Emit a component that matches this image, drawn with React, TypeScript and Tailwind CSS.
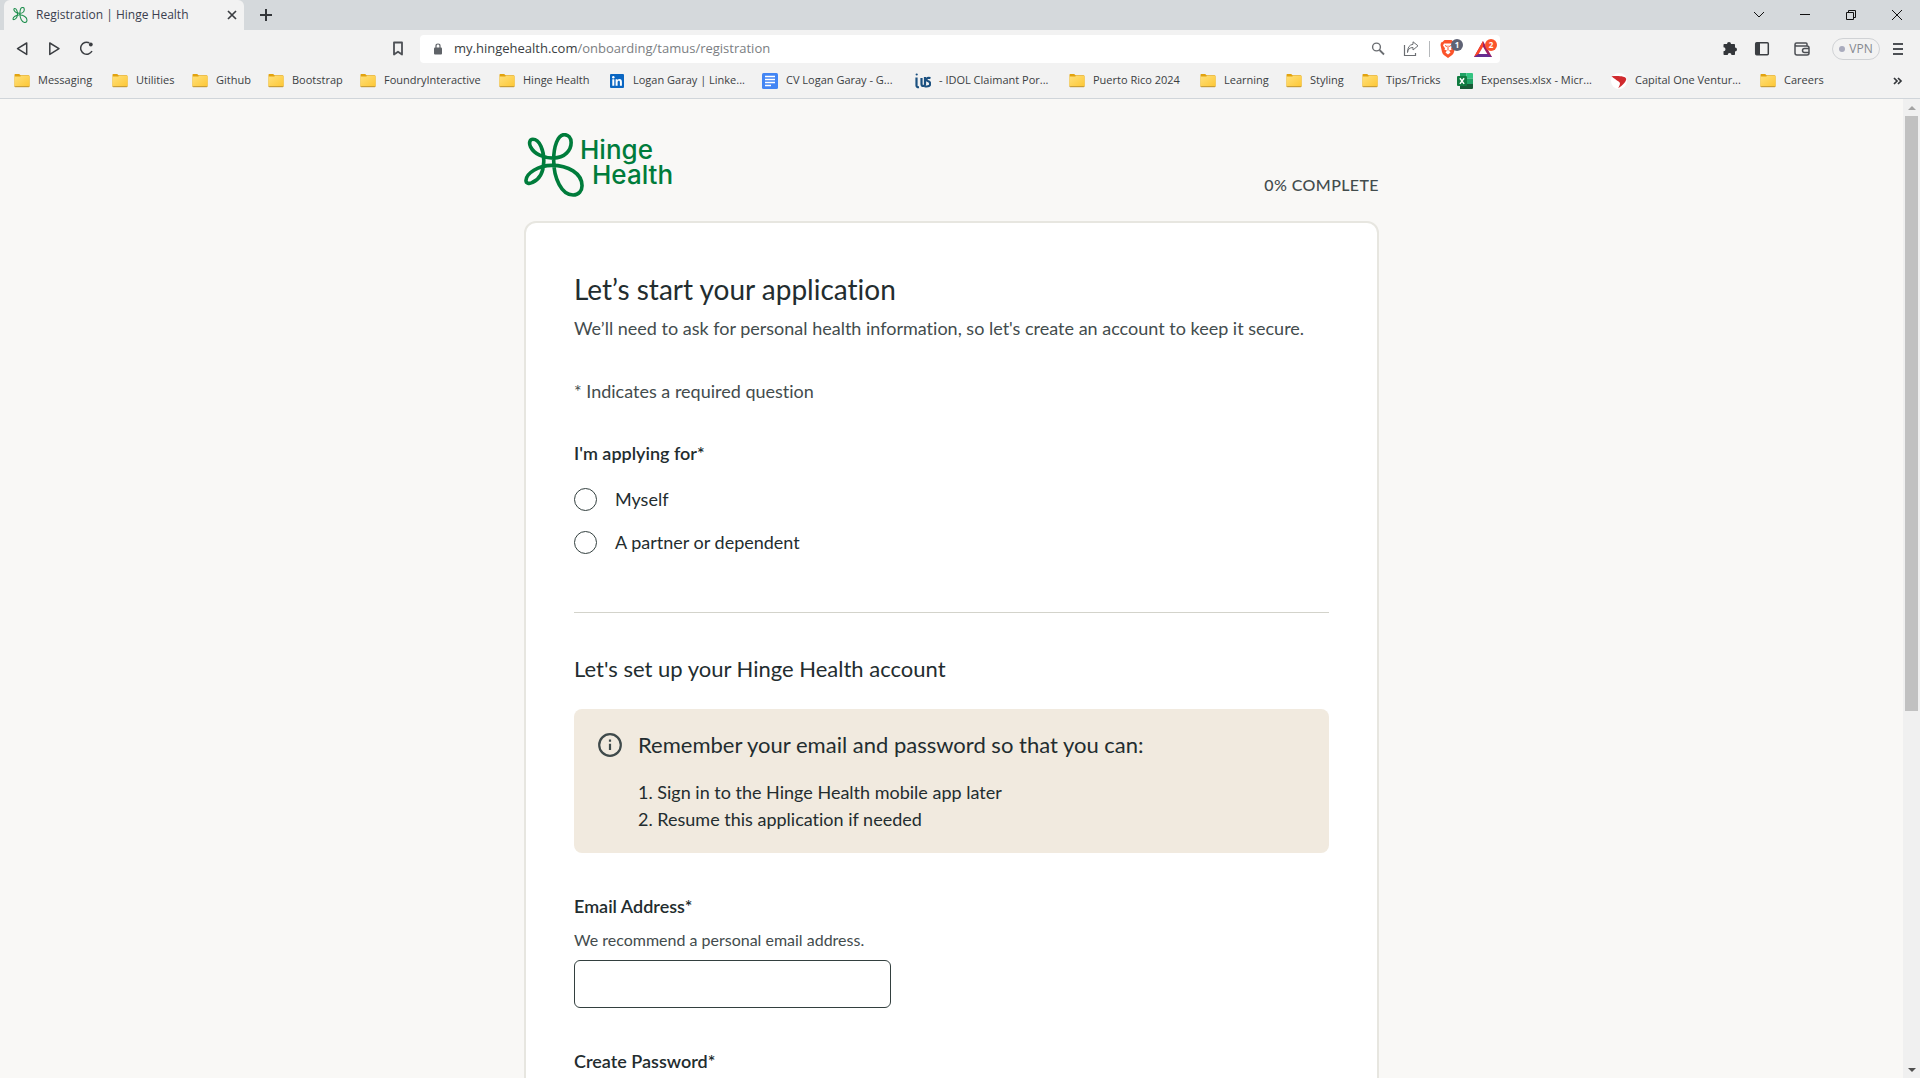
import type { ReactNode } from 'react';

const FolderIcon = () => (
  <svg className="size-4 shrink-0" viewBox="0 0 16 16" aria-hidden="true">
    <defs>
      <linearGradient id="folder" x1="0" y1="0" x2="1" y2="1">
        <stop offset="0" stopColor="#ffe07a" />
        <stop offset="1" stopColor="#fdc735" />
      </linearGradient>
    </defs>
    <path d="M.5 1.700q0-.7.700-.7h4l1.300 1.300h8q1 0 1 .9v10H.5z" fill="#e2a310" />
    <path d="M.5 3.500h5.800l.8-.8h7.600q.8 0 .8.800v9.300q0 .7-.7.700H1.200q-.7 0-.7-.7z" fill="url(#folder)" />
    <path d="M.6 13.100q.2.600.8.600h13.200q.6 0 .8-.6" fill="none" stroke="#b98a1c" strokeWidth=".9" />
  </svg>
);

const LinkedInIcon = () => (
  <svg className="size-4 shrink-0" viewBox="0 0 16 16" aria-hidden="true">
    <rect x="1" y="1" width="14" height="14" rx="1" fill="#0a66c2" />
    <path d="M3.300 6.300h2v6.400h-2zM6.600 6.300h1.900v.9c.4-.7 1.100-1.100 2-1.100 1.800 0 2.400 1.100 2.400 3v3.600h-2V9.400c0-.9-.2-1.600-1.100-1.600S8.600 8.500 8.600 9.400v3.300h-2z" fill="#fff" />
    <circle cx="4.300" cy="4.200" r="1.200" fill="#fff" />
  </svg>
);

const DocIcon = () => (
  <svg className="size-4 shrink-0" viewBox="0 0 16 16" aria-hidden="true">
    <rect width="16" height="16" rx="1.500" fill="#4285f4" />
    <path d="M3 3.500h10M3 6.500h10M3 9.500h10M3 12.500h6" stroke="#fff" strokeWidth="1.400" />
  </svg>
);

const IusIcon = () => (
  <svg className="size-4 shrink-0" viewBox="0 0 16 16" fill="none" stroke="#1c5180" aria-hidden="true">
    <path d="M1.500 4.500v8q0 2 2.500 1.700M6.500 5v6q0 2 1.700 2 1.800 0 1.800-2V4" strokeWidth="2.200" />
    <path d="M15.500 5q-4-.8-4 1.400 0 1.300 1.800 1.900 1.900.7 1.900 2.400 0 3.500-5.500 2.600" strokeWidth="2.200" />
    <circle cx="1.700" cy="1.500" r="1.100" fill="#1c5180" stroke="none" />
  </svg>
);

const ExcelIcon = () => (
  <svg className="size-4 shrink-0" viewBox="0 0 16 16" aria-hidden="true">
    <path d="M3 0h6.500v5.500H3z" fill="#21a366" />
    <path d="M9.500 0H15q1 0 1 1v4.500H9.500z" fill="#33c481" />
    <path d="M3 5.500h6.500V11H3z" fill="#107c41" />
    <path d="M9.500 5.500H16V11H9.500z" fill="#21a366" />
    <path d="M3 11h13v4q0 1-1 1H3z" fill="#185c37" />
    <rect y="3" width="10" height="10" rx="1" fill="#107c41" />
    <path d="M2.900 5.200l4.200 5.700M7.100 5.200l-4.200 5.700" stroke="#fff" strokeWidth="1.500" />
  </svg>
);

const CapitalIcon = () => (
  <svg className="size-4 shrink-0" viewBox="0 0 16 16" aria-hidden="true">
    <circle cx="8" cy="8" r="8" fill="#fff" />
    <path d="M.5 3.200C6 2.700 15 2.700 15.200 6c.1 2.800-4.200 6.800-8 9.200 1.200-2.500 2.300-4.300 1.500-5.700C7.600 8 3.500 6 .5 3.200z" fill="#d02a2e" />
  </svg>
);

type Bookmark = { label: string; width: string; icon?: ReactNode };

const bookmarks: Bookmark[] = [
  { label: 'Messaging', width: 'w-[98px]' },
  { label: 'Utilities', width: 'w-[80px]' },
  { label: 'Github', width: 'w-[76px]' },
  { label: 'Bootstrap', width: 'w-[92px]' },
  { label: 'FoundryInteractive', width: 'w-[139px]' },
  { label: 'Hinge Health', width: 'w-[110px]' },
  { label: 'Logan Garay | Linke...', width: 'w-[153px]', icon: <LinkedInIcon /> },
  { label: 'CV Logan Garay - G...', width: 'w-[153px]', icon: <DocIcon /> },
  { label: '- IDOL Claimant Por...', width: 'w-[154px]', icon: <IusIcon /> },
  { label: 'Puerto Rico 2024', width: 'w-[131px]' },
  { label: 'Learning', width: 'w-[86px]' },
  { label: 'Styling', width: 'w-[76px]' },
  { label: 'Tips/Tricks', width: 'w-[95px]' },
  { label: 'Expenses.xlsx - Micr...', width: 'w-[154px]', icon: <ExcelIcon /> },
  { label: 'Capital One Ventur...', width: 'w-[149px]', icon: <CapitalIcon /> },
  { label: 'Careers', width: 'w-[80px]' },
];

const Butterfly = ({ className, color, weight }: { className: string; color: string; weight: number }) => (
  <svg className={className} viewBox="42 68 180 194" fill="none" stroke={color} strokeWidth={weight} aria-hidden="true">
    <path d="M101 155C102 120 88 87 68 87C57 87 56 100 61 110C72 132 100 144 130 144C165 144 184 120 184 97C184 82 175 73 163 73C143 73 131 110 131 150C131 205 155 256 190 256C207 256 217 243 217 228C217 190 175 166 125 166C85 166 47 190 47 212C47 221 57 223 66 218C85 210 100 190 101 155Z" />
  </svg>
);

const TabStrip = () => (
  <div className="flex h-[30px] items-stretch bg-[#d5d9dc] pl-1">
    <div className="flex w-60 items-center rounded-t-md bg-[#f2f2f2] pr-1.5 pl-2">
      <Butterfly className="size-4" color="#1f8f4e" weight={13} />
      <span className="ml-2 flex-1 text-xs whitespace-nowrap text-[#3b3e4f]">Registration | Hinge Health</span>
      <button aria-label="Close tab" className="flex size-3 items-center justify-center">
        <svg className="size-3" viewBox="0 0 12 12" stroke="#3b3e42" strokeWidth="1.700"><path d="M2 2l8 8M10 2l-8 8" /></svg>
      </button>
    </div>
    <button aria-label="New tab" className="ml-4 self-center">
      <svg className="size-3" viewBox="0 0 12 12" stroke="#33363a" strokeWidth="2"><path d="M6 0v12M0 6h12" /></svg>
    </button>
    <div className="ml-auto flex items-center">
      <button aria-label="Search tabs" className="flex w-[46px] justify-center">
        <svg className="size-3" viewBox="0 0 12 12" fill="none" stroke="#111"><path d="M1 3l5 5 5-5" /></svg>
      </button>
      <button aria-label="Minimize" className="flex w-[46px] justify-center">
        <svg className="size-3" viewBox="0 0 12 12" stroke="#111"><path d="M1 5.500h10" /></svg>
      </button>
      <button aria-label="Restore" className="flex w-[46px] justify-center">
        <svg className="size-3" viewBox="0 0 12 12" fill="none" stroke="#111"><path d="M1.500 3.500h7v7h-7zM3.500 3.500v-2h7v7h-2" /></svg>
      </button>
      <button aria-label="Close window" className="flex w-[46px] justify-center">
        <svg className="size-3" viewBox="0 0 12 12" stroke="#111"><path d="M1 1l10 10M11 1L1 11" /></svg>
      </button>
    </div>
  </div>
);

const Toolbar = () => (
  <div className="flex h-[37px] items-center px-4">
    <div className="flex w-[388px] items-center gap-4">
      <button aria-label="Back">
        <svg className="size-4" viewBox="0 0 16 16" fill="none" stroke="#3b3e42" strokeWidth="1.500" strokeLinejoin="round"><path d="M10.700 2v11.400L1.500 7.700z" /></svg>
      </button>
      <button aria-label="Forward">
        <svg className="size-4" viewBox="0 0 16 16" fill="none" stroke="#3b3e42" strokeWidth="1.500" strokeLinejoin="round"><path d="M1.800 2v11.400L11 7.700z" /></svg>
      </button>
      <button aria-label="Reload">
        <svg className="size-4" viewBox="0 0 16 16" fill="none" stroke="#3b3e42" strokeWidth="1.500"><path d="M9.300 1.800A6 6 0 1 0 12 10" /><circle cx="10.800" cy="3.500" r="1.900" fill="#3b3e42" stroke="none" /></svg>
      </button>
      <button aria-label="Bookmark this page" className="ml-auto">
        <svg className="h-4 w-3" viewBox="0 0 12 16" fill="none" stroke="#4d5055" strokeWidth="1.800" strokeLinejoin="round"><path d="M2 1.500h8v12l-4-2.800-4 2.800z" /></svg>
      </button>
    </div>
    <div className="ml-4 flex h-7 max-w-[1080px] flex-1 items-center rounded bg-white pr-2 pl-3.5">
      <svg className="h-3 w-2" viewBox="0 0 8 12" aria-hidden="true"><rect y="4.500" width="8" height="7" rx="1" fill="#5f6368" /><path d="M2 5V3q0-2 2-2t2 2v2" fill="none" stroke="#5f6368" strokeWidth="1.200" /></svg>
      <p className="ml-3 flex-1 text-[13px] whitespace-nowrap text-[#7b7e82]"><span className="text-[#3b3e42]">my.hingehealth.com</span>/onboarding/tamus/registration</p>
      <button aria-label="Zoom">
        <svg className="size-3.5" viewBox="0 0 14 14" fill="none" stroke="#6b6e72" strokeWidth="1.400"><circle cx="5.500" cy="5" r="3.900" /><path d="M8.500 8l4.500 4.500" strokeWidth="1.800" /></svg>
      </button>
      <button aria-label="Share" className="ml-[18px]">
        <svg className="size-4" viewBox="0 0 16 16" fill="none" stroke="#6b6e72"><path d="M1.500 4v10.500h11V12" strokeWidth="1.200" /><path d="M4.500 11.500q.5-5 5.500-5V9l5-4.200-5-4v2.500Q4.500 4 4.500 11.500z" /></svg>
      </button>
      <span className="ml-2.5 h-4 w-px bg-[#b5b8bb]" />
      <button aria-label="Brave Shields" className="relative ml-2.5">
        <svg className="h-[18px] w-4" viewBox="0 0 16 18"><path d="M4.500 0h7L13.500 2l1.500.5.5 2.500-1.500 7q-.5 2-2.500 3.500L8 18l-3.500-2.500Q2.500 14 2 12L.5 5 1 2.500 2.500 2z" fill="#fb542b" /><path d="M4 3.500h8l1 2-2 2.800.5 1.500-2.500.7 1.500 2L8 14.500 5.500 12.500l1.500-2-2.500-.7.5-1.500L3 5.500z" fill="#fff" /><path d="M5 5.500l2 1M11 5.500l-2 1M8 5.500v5" stroke="#fb542b" /></svg>
        <span className="absolute -top-px left-[11px] flex size-3 items-center justify-center rounded-full bg-[#5f6375] text-[8px] font-bold text-white">1</span>
      </button>
      <button aria-label="Brave Rewards" className="relative ml-[18px]">
        <svg className="h-4 w-[18px]" viewBox="0 0 18 16"><path d="M9 0l9 16H0z" fill="#9e1f63" /><path d="M9 0v6L4.500 13 0 16z" fill="#ff4724" /><path d="M0 16l4.500-3h9l4.500 3z" fill="#662d91" /><path d="M9 5.800l4.300 7.200H4.700z" fill="#fff" /></svg>
        <span className="absolute -top-0.5 left-[11px] flex size-3 items-center justify-center rounded-full bg-[#fb542b] text-[8px] font-bold text-white">2</span>
      </button>
    </div>
    <div className="ml-auto flex items-center">
      <button aria-label="Extensions">
        <svg className="size-4" viewBox="0 0 16 16" fill="#33363a"><path d="M5 3a2 2 0 1 1 4 0h3.200q.8 0 .8.800V6.500a2 2 0 1 1 0 4v2.700q0 .8-.8.800H9.500a1.900 1.900 0 0 0-3.800 0H2.300q-.8 0-.8-.8v-3a2 2 0 0 0 0-4V3.800q0-.8.8-.8z" /></svg>
      </button>
      <button aria-label="Sidebar" className="ml-4">
        <svg className="size-4" viewBox="0 0 16 16"><rect x="1.700" y="1.700" width="12.600" height="12" rx="1" fill="none" stroke="#3b3e42" strokeWidth="1.500" /><path d="M2 2h4v12H2z" fill="#3b3e42" /></svg>
      </button>
      <button aria-label="Wallet" className="ml-6">
        <svg className="size-4" viewBox="0 0 16 16" fill="none" stroke="#4d5055" strokeWidth="1.500"><path d="M13 5V3q0-1-1-1H2.500Q1 2 1 3.500V12q0 2 2 2h10q2 0 2-2V7q0-2-2-2H2.500Q1 5 1 3.500" /><path d="M15 7.500h-4.500a2 2 0 0 0 0 4H15" /></svg>
      </button>
      <button className="ml-[22px] flex h-[22px] w-12 items-center justify-center gap-1 rounded-full border border-[#d0d2d5] text-xs text-[#85888f]">
        <span className="size-1.5 rounded-full bg-[#a9abbd]" />VPN
      </button>
      <button aria-label="Menu" className="ml-3">
        <svg className="h-4 w-3" viewBox="0 0 12 16" stroke="#4d5055" strokeWidth="1.800"><path d="M1 3h10M1 8h10M1 13h10" /></svg>
      </button>
    </div>
  </div>
);

const BookmarksBar = () => (
  <nav className="flex h-8 items-center border-b border-[#d0d5da] pr-4 pb-1 pl-3.5">
    {bookmarks.map((b) => (
      <a key={b.label} href="#" className={`flex shrink-0 items-center gap-2 whitespace-nowrap text-[#3b3e42] ${b.width}`}>
        {b.icon ?? <FolderIcon />}
        {b.label}
      </a>
    ))}
    <button aria-label="More bookmarks" className="ml-auto">
      <svg className="h-3 w-3" viewBox="0 0 12 12" fill="none" stroke="#33363a" strokeWidth="1.700"><path d="M2 3l3 3-3 3M6 3l3 3-3 3" /></svg>
    </button>
  </nav>
);

const Scrollbar = () => (
  <div className="flex w-[17px] shrink-0 flex-col items-center bg-[#f0f0f0]">
    <svg className="h-[17px] w-2" viewBox="0 0 8 17"><path d="M0 11h8L4 7z" fill="#a3a3a3" /></svg>
    <div className="flex w-full flex-1 justify-center">
      <div className="h-[63%] w-[13px] bg-[#c1c1c1]" />
    </div>
    <svg className="h-[17px] w-2" viewBox="0 0 8 17"><path d="M0 7h8l-4 4z" fill="#505050" /></svg>
  </div>
);

const Choice = ({ label }: { label: string }) => (
  <label className="flex h-[27px] items-center gap-[18px] text-[#232d2f]">
    <input type="radio" name="applicant" className="size-[23px] appearance-none rounded-full border border-[#33403f] bg-white checked:bg-[#007c3b]" />
    {label}
  </label>
);

const Registration = () => (
  <main className="flex-1 overflow-hidden bg-[#f9f8f6] font-['Lato',sans-serif] text-[18px] leading-[27px] text-[#434c4d] [font-variant-ligatures:none]">
    <div className="mx-auto w-full max-w-[855px] pt-[34px]">
      <header className="flex h-16 items-start justify-between">
        <a href="#" aria-label="Hinge Health" className="flex font-['Inter',sans-serif] text-[26px] leading-[25px] font-medium text-[#007c3b]">
          <Butterfly className="h-16 w-[60px]" color="#007c3b" weight={11} />
          <span className="flex flex-col pt-1">
            <span className="-ml-1">Hinge</span>
            <span className="ml-2">Health</span>
          </span>
        </a>
        <p className="pt-[38px] text-base leading-[27px] font-medium tracking-wide">0% COMPLETE</p>
      </header>
      <section className="mt-6 rounded-xl border-2 border-[#e7e6e0] bg-white px-12 pt-[46px] pb-12">
        <h1 className="text-[28px] leading-[40px] text-[#232d2f]">Let’s start your application</h1>
        <p className="mt-1.5">We’ll need to ask for personal health information, so let's create an account to keep it secure.</p>
        <p className="mt-9">* Indicates a required question</p>
        <fieldset className="mt-[35px]">
          <legend className="font-semibold text-[#232d2f]">I'm applying for*</legend>
          <div className="mt-[19px] flex flex-col gap-4">
            <Choice label="Myself" />
            <Choice label="A partner or dependent" />
          </div>
        </fieldset>
        <hr className="mt-14 border-[#d3d3cb]" />
        <h2 className="mt-10 text-[22px] leading-8 text-[#232d2f]">Let's set up your Hinge Health account</h2>
        <aside className="mt-6 flex gap-4 rounded-lg bg-[#f1eadf] px-6 pt-5 pb-5 text-[#232d2f]">
          <svg className="mt-1 size-6 shrink-0" viewBox="0 0 24 24" fill="none" stroke="#3f4a4b" strokeWidth="2.200" aria-hidden="true"><circle cx="12" cy="12" r="10.800" /><path d="M12 10.800V17M12 6.500v2.300" /></svg>
          <div>
            <h3 className="text-[22px] leading-8">Remember your email and password so that you can:</h3>
            <ol className="mt-[18px] list-inside list-decimal">
              <li>Sign in to the Hinge Health mobile app later</li>
              <li>Resume this application if needed</li>
            </ol>
          </div>
        </aside>
        <label htmlFor="email" className="mt-10 block font-semibold text-[#232d2f]">Email Address*</label>
        <p id="email-hint" className="mt-2 text-base leading-6">We recommend a personal email address.</p>
        <input id="email" type="email" aria-describedby="email-hint" className="mt-2 block h-12 w-[317px] rounded-md border border-[#33403f] px-3" />
        <label htmlFor="password" className="mt-10 block font-semibold text-[#232d2f]">Create Password*</label>
        <input id="password" type="password" className="mt-2 block h-12 w-[317px] rounded-md border border-[#33403f] px-3" />
      </section>
    </div>
  </main>
);

export default function App() {
  return (
    <div className="flex h-screen flex-col overflow-hidden bg-[#f2f2f2] font-['Open_Sans',sans-serif] text-[11px]">
      <TabStrip />
      <Toolbar />
      <BookmarksBar />
      <div className="flex min-h-0 flex-1">
        <Registration />
        <Scrollbar />
      </div>
    </div>
  );
}
